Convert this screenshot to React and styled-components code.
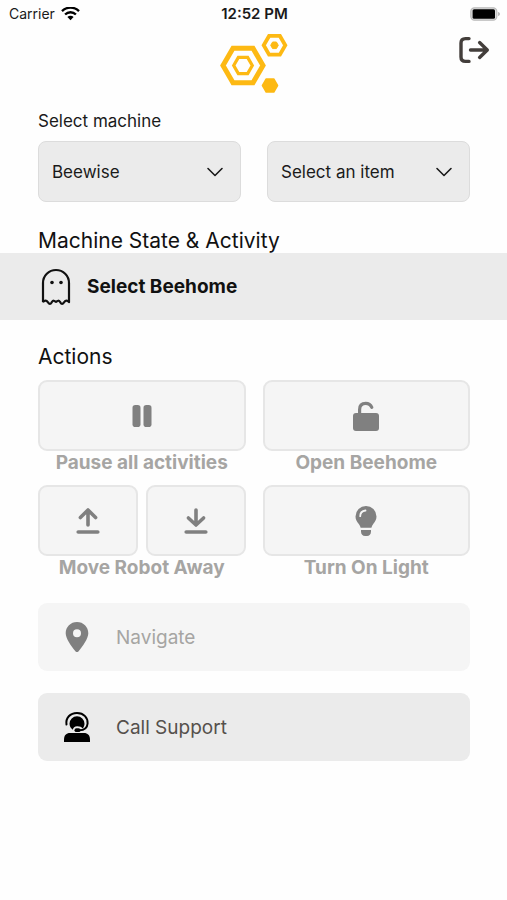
import React, { useState } from 'react';
import styled, { createGlobalStyle } from 'styled-components';

const GlobalStyle = createGlobalStyle`
  * {
    box-sizing: border-box;
  }

  body {
    margin: 0;
    background: #fefefe;
    color: #1a1a1a;
    font-family: Inter, "Liberation Sans", sans-serif;
  }

  button, select {
    font-family: inherit;
  }
`;

const StatusBar = styled.div`
  display: grid;
  grid-template-columns: 1fr auto 1fr;
  align-items: center;
  height: 28px;
  padding: 0 7px 0 9px;
  font-size: 14px;
  line-height: 20px;
`;

const Carrier = styled.div`
  display: flex;
  align-items: center;
  gap: 6px;
`;

const Time = styled.div`
  font-size: 15px;
  font-weight: 600;
`;

const Battery = styled.svg`
  justify-self: end;
`;

const Header = styled.header`
  display: grid;
  grid-template-columns: 1fr auto 1fr;
  align-items: start;
  padding: 4px 17px 0;
`;

const Logo = styled.svg`
  grid-column: 2;
`;

const LogoutButton = styled.button`
  display: flex;
  justify-self: end;
  padding: 4px 0;
  border: 0;
  background: none;
  color: #433e3b;
`;

const Section = styled.section`
  padding: 0 37px 0 38px;
`;

const Selects = styled.div`
  display: grid;
  grid-template-columns: 1fr 1fr;
  gap: 26px;
`;

const Label = styled.label`
  display: block;
  padding: 15px 0 8px;
  font-size: 17px;
  line-height: 24px;
`;

const SelectBox = styled.div`
  display: grid;
  align-items: center;

  > * {
    grid-area: 1 / 1;
  }
`;

const Select = styled.select`
  appearance: none;
  width: 100%;
  height: 61px;
  padding: 0 48px 0 13px;
  border: 1px solid #dcdcdc;
  border-radius: 8px;
  background: #ebebeb;
  color: #1a1a1a;
  font-size: 17px;
`;

const Chevron = styled.svg`
  justify-self: end;
  margin-right: 17px;
  pointer-events: none;
`;

const Title = styled.h2`
  margin: 0;
  padding-top: ${props => props.$top};
  color: #111;
  font-size: 21px;
  font-weight: 400;
  line-height: 24px;
`;

const StateBand = styled.div`
  display: flex;
  align-items: center;
  gap: 16px;
  height: 67px;
  padding: 0 41px;
  background: #ebebeb;
  color: #111;
  font-size: 19px;
  font-weight: 700;
`;

const Actions = styled.div`
  display: grid;
  grid-template-columns: 1fr 1fr;
  gap: 10px 17px;
  padding-top: 11px;
`;

const Action = styled.div`
  display: flex;
  flex-direction: column;
`;

const Pair = styled.div`
  display: flex;
  gap: 8px;
`;

const ActionButton = styled.button`
  display: flex;
  flex: 1;
  align-items: center;
  justify-content: center;
  min-height: 71px;
  padding: 0;
  border: 2px solid #e6e6e6;
  border-radius: 9px;
  background: #f5f5f5;
  color: #808080;
`;

const ActionName = styled.div`
  color: #a6a5a3;
  font-size: 19px;
  font-weight: 700;
  line-height: 24px;
  text-align: center;
`;

const Links = styled.div`
  display: flex;
  flex-direction: column;
  gap: 22px;
  padding-top: 23px;
`;

const WideButton = styled.button`
  display: flex;
  align-items: center;
  gap: 25px;
  height: 68px;
  padding: 0 25px;
  border: 0;
  border-radius: 9px;
  background: ${props => (props.disabled ? '#f5f5f5' : '#ebebeb')};
  color: ${props => (props.disabled ? '#a6a5a3' : '#55504c')};
  font-size: 19px;
`;

const hexPoints = (cx, cy, r) => {
  const h = r * 0.866;
  return [
    [cx - r, cy], [cx - r / 2, cy - h], [cx + r / 2, cy - h],
    [cx + r, cy], [cx + r / 2, cy + h], [cx - r / 2, cy + h]
  ].join(' ');
};

const WifiIcon = () => (
  <svg width="19" height="14" viewBox="0 0 19 14" fill="none" stroke="#000" strokeWidth="2.4">
    <path d="M1 4.2a12 12 0 0 1 17 0" />
    <path d="M4.1 7.5a7.7 7.7 0 0 1 10.8 0" />
    <path d="M9.5 13.200L6.4 10a4.4 4.4 0 0 1 6.2 0z" fill="#000" stroke="none" />
  </svg>
);

const BatteryIcon = () => (
  <Battery width="30" height="14" viewBox="0 0 30 14">
    <rect x="0.8" y="0.8" width="26" height="12.4" rx="3.6" fill="#ddd" stroke="#bbb" strokeWidth="1.2" />
    <rect x="2.6" y="2.300" width="22.4" height="9.4" rx="1.5" fill="#000" />
    <path d="M28.2 5v4c1-.4 1.6-1.1 1.6-2s-.6-1.6-1.6-2z" fill="#aaa" />
  </Battery>
);

const LogoIcon = () => (
  <Logo width="68" height="62" viewBox="0 0 68 62" fill="none" stroke="#fdb913">
    <polygon points={hexPoints(23, 33.5, 20)} strokeWidth="5" />
    <polygon points={hexPoints(23, 33.5, 9.3)} strokeWidth="3.2" />
    <polygon points={hexPoints(54.5, 13.3, 10.8)} strokeWidth="3.8" />
    <polygon points={hexPoints(54.5, 13.3, 3.8)} fill="#fdb913" strokeWidth="1" strokeLinejoin="round" />
    <polygon points={hexPoints(50, 53.5, 7.5)} fill="#fdb913" strokeWidth="1.6" strokeLinejoin="round" />
  </Logo>
);

const LogoutIcon = () => (
  <svg width="32" height="28" viewBox="0 0 32 28" fill="none" stroke="currentColor" strokeWidth="3.4" strokeLinecap="round" strokeLinejoin="round">
    <path d="M11 2.6H7.5Q3 2.6 3 7v14q0 4.4 4.5 4.4H11" />
    <path d="M12.5 14H29M21.6 6.6L29.3 14l-7.700 7.400" />
  </svg>
);

const ChevronIcon = () => (
  <Chevron width="18" height="12" viewBox="0 0 18 12" fill="none" stroke="#1a1a1a" strokeWidth="1.6" strokeLinecap="round" strokeLinejoin="round">
    <path d="M2 2.500l7 7 7-7" />
  </Chevron>
);

const GhostIcon = () => (
  <svg width="30" height="38" viewBox="0 0 30 38" fill="none" stroke="#111" strokeWidth="2.200" strokeLinejoin="round">
    <path d="M2 34.200V15a13 13 0 0 1 26 0v19.200q-2.500-3.400-5 .2-2 3-3.600 0Q17 31 15 34.500" />
    <path d="M2 34.200q2.500-3.400 5 .2 2 3 3.600 0 2.300-3.400 4.400.1" />
    <circle cx="11" cy="14.500" r="1.800" fill="#111" stroke="none" />
    <circle cx="20" cy="14.500" r="1.800" fill="#111" stroke="none" />
  </svg>
);

const PauseIcon = () => (
  <svg width="20" height="24" viewBox="0 0 20 24" fill="currentColor">
    <rect x="0.500" y="1" width="8" height="22" rx="2.800" />
    <rect x="11.500" y="1" width="8" height="22" rx="2.800" />
  </svg>
);

const UnlockIcon = () => (
  <svg width="28" height="30" viewBox="0 0 28 30" fill="currentColor">
    <rect x="1" y="12" width="26" height="18" rx="3" />
    <path d="M7.6 13V8.500C7.6 4.500 10 2.400 13.700 2.400c3 0 5 1.500 6.100 4" fill="none" stroke="currentColor" strokeWidth="3.200" strokeLinecap="round" />
  </svg>
);

const ArrowIcon = ({ down }) => (
  <svg width="24" height="28" viewBox="0 0 24 28" fill="none" stroke="currentColor" strokeWidth="3.600" strokeLinecap="round" strokeLinejoin="round">
    <path d={down ? 'M12 3v14.500M4.400 11l7.600 7 7.600-7' : 'M12 18V3.500M4.400 10.500L12 3l7.600 7.500'} />
    <path d="M2.200 25h19.600" />
  </svg>
);

const BulbIcon = () => (
  <svg width="22" height="30" viewBox="0 0 22 30" fill="currentColor">
    <path d="M11 0a10.500 10.500 0 0 1 10.500 10.500c0 3.300-1.500 5.200-3.100 7.200-1 1.300-1.700 2.500-2 4.100H5.600c-.3-1.600-1-2.800-2-4.100C2 15.700.5 13.800.5 10.500A10.500 10.500 0 0 1 11 0z" />
    <path d="M6 24h10v1.500c0 2.800-1.700 4.500-4 4.500h-2c-2.300 0-4-1.700-4-4.500z" />
    <path d="M5.200 10.200c0-3.200 2-5.300 5.300-5.700" fill="none" stroke="#f5f5f5" strokeWidth="1.800" strokeLinecap="round" />
  </svg>
);

const PinIcon = () => (
  <svg width="28" height="30" viewBox="0 0 28 30" fill="#808080" fillRule="evenodd">
    <path d="M14 0c6.400 0 11.300 4.900 11.300 11.200 0 5.300-5.500 13-9.700 18a2.100 2.100 0 0 1-3.200 0C8.200 24.200 2.700 16.500 2.700 11.200 2.700 4.900 7.600 0 14 0zm0 7.200a4 4 0 1 0 0 8 4 4 0 0 0 0-8z" />
  </svg>
);

const SupportIcon = () => (
  <svg width="28" height="32" viewBox="0 0 28 32" fill="#000">
    <path d="M1 31v-2.500C1 24.200 3.300 22 7 22h14c3.700 0 6 2.200 6 6.500V31z" />
    <path d="M3.500 13.500C2.500 6.800 7.200 2 14 2s11 4.700 10.600 10.500c-.4 4.600-3.600 6.700-8.200 6.700" fill="none" stroke="#000" strokeWidth="2" strokeLinecap="round" />
    <path d="M14 5.200a7.500 7.500 0 0 1 7.500 7.500c0 1.900-.7 3.500-1.900 4.700-1-1.300-2.600-2.200-5.400-2.200-2.600 0-4 1.300-4.300 3.500a7.500 7.500 0 0 1-3.400-6A7.500 7.500 0 0 1 14 5.200z" />
    <rect x="11.500" y="17.300" width="6" height="3.700" rx="1.850" />
  </svg>
);

const Machine = () => {
  const [company, setCompany] = useState('Beewise');
  const [item, setItem] = useState('');

  return (
    <Section>
      <Label htmlFor="company">Select machine</Label>
      <Selects>
        <SelectBox>
          <Select id="company" value={company} onChange={e => setCompany(e.target.value)}>
            <option value="Beewise">Beewise</option>
          </Select>
          <ChevronIcon />
        </SelectBox>
        <SelectBox>
          <Select aria-label="Select an item" value={item} onChange={e => setItem(e.target.value)}>
            <option value="">Select an item</option>
          </Select>
          <ChevronIcon />
        </SelectBox>
      </Selects>
    </Section>
  );
};

const App = () => (
  <>
    <GlobalStyle />
    <StatusBar>
      <Carrier>Carrier <WifiIcon /></Carrier>
      <Time>12:52 PM</Time>
      <BatteryIcon />
    </StatusBar>
    <Header>
      <LogoIcon />
      <LogoutButton type="button" aria-label="Log out"><LogoutIcon /></LogoutButton>
    </Header>
    <main>
      <Machine />
      <Section>
        <Title $top="27px">Machine State &amp; Activity</Title>
      </Section>
      <StateBand>
        <GhostIcon />
        Select Beehome
      </StateBand>
      <Section>
        <Title $top="25px">Actions</Title>
        <Actions>
          <Action>
            <ActionButton type="button" disabled aria-labelledby="pause"><PauseIcon /></ActionButton>
            <ActionName id="pause">Pause all activities</ActionName>
          </Action>
          <Action>
            <ActionButton type="button" disabled aria-labelledby="open"><UnlockIcon /></ActionButton>
            <ActionName id="open">Open Beehome</ActionName>
          </Action>
          <Action>
            <Pair>
              <ActionButton type="button" disabled aria-label="Up"><ArrowIcon /></ActionButton>
              <ActionButton type="button" disabled aria-label="Down"><ArrowIcon down /></ActionButton>
            </Pair>
            <ActionName>Move Robot Away</ActionName>
          </Action>
          <Action>
            <ActionButton type="button" disabled aria-labelledby="light"><BulbIcon /></ActionButton>
            <ActionName id="light">Turn On Light</ActionName>
          </Action>
        </Actions>
        <Links>
          <WideButton type="button" disabled><PinIcon />Navigate</WideButton>
          <WideButton type="button"><SupportIcon />Call Support</WideButton>
        </Links>
      </Section>
    </main>
  </>
);

export default App;
